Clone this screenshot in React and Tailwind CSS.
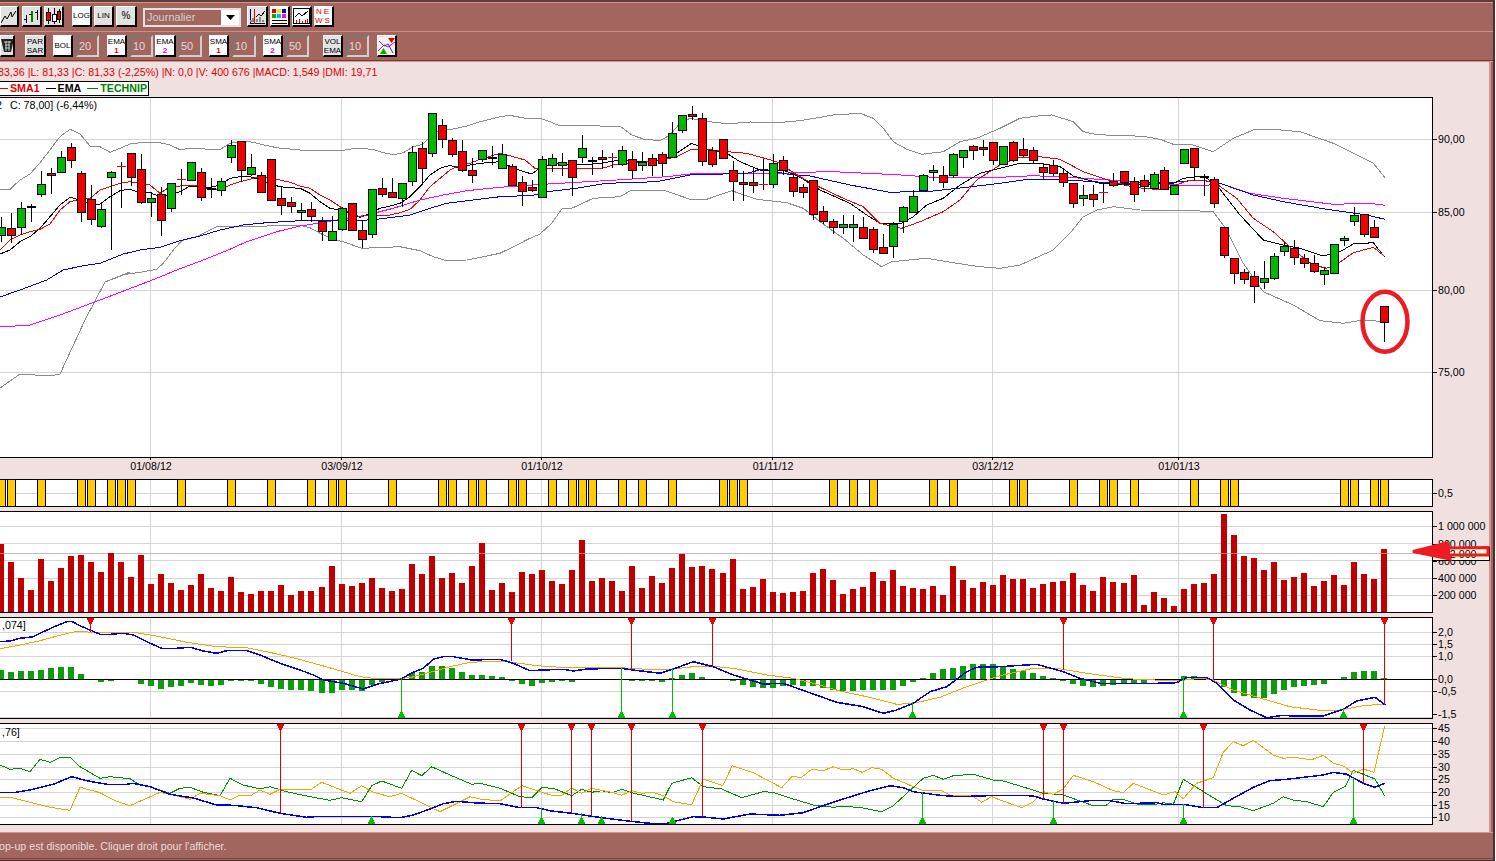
import React from "react";

// all chart data was read from the 3x crops: x = (offset + X) / 3, y = page origin + Y / 3
const candlesA = [
  ["g",380,405,350,425],["r",385,405,340,430],["g",325,382,305,405],["k",318,323,312,365],["g",253,283,213,290],["r",218,224,205,282],["g",170,215,152,218],["r",142,181,130,203],["r",220,335,213,365],["r",298,358,255,375],
  ["g",328,377,310,385],["g",217,230,212,450],["d",197,197,185,323],["r",160,232,160,258],["r",208,307,163,312],["g",295,307,275,350],["r",283,361,262,408],["g",250,325,250,335],["d",238,238,208,285],["g",187,241,187,241],
  ["r",217,292,205,303],["k",265,271,235,293],["g",244,271,235,288],["g",136,172,120,190],["r",124,211,124,245],["g",202,223,163,228],["r",226,275,215,275],["r",178,301,178,301],["r",295,316,260,345],["r",307,319,292,338],
  ["g",331,337,310,362],["r",328,349,305,365],["r",364,394,352,423],["g",394,421,348,421],["g",325,388,322,392],["r",310,391,310,391],["r",391,418,362,445],["g",268,403,268,415],["r",265,281,235,290],["r",277,292,235,293],
  ["g",250,295,248,320],["g",157,244,138,258],["r",145,205,125,252],["g",40,160,40,170],["r",76,118,57,143],["r",121,163,115,172],["r",154,211,120,215],["r",211,226,175,248],["g",151,178,151,187],["k",172,175,138,195],
  ["g",163,205,132,208],["r",199,256,193,258],["r",247,274,228,318],["r",262,271,240,275],["g",176,292,168,292],["g",175,196,162,215],["g",187,196,160,228],["r",181,232,181,288],["g",145,172,105,188],["k",181,185,170,225],
  ["r",172,178,150,208],["d",172,172,160,205],["g",151,193,138,197],["r",178,211,153,237],["g",187,196,157,212],["r",175,196,163,228],["r",163,190,155,228],["g",100,172,66,175],["g",46,91,46,98],["r",43,49,18,60],
  ["r",55,184,40,197],["r",151,193,140,200],["r",118,175,118,178],["r",211,244,183,302],["r",247,253,212,302],["r",247,256,205,280],["d",253,253,178,270],["g",190,253,162,263],["r",181,211,168,225],["r",232,274,218,290],
  ["r",262,277,252,293],["r",241,343,241,360],["r",334,364,318,373],["r",364,382,358,402],["g",373,382,345,402],["g",373,382,345,425],["r",382,415,352,415],["r",388,448,382,458],["r",442,460,402,460],["g",373,439,365,473],
  ["g",322,364,318,398],["g",289,337,270,337],["g",226,271,222,271],["g",211,217,195,243],["r",226,247,198,263],["g",163,226,160,233],["g",151,172,151,205],["r",139,151,135,180],["r",142,148,120,168],["r",127,181,127,195],
  ["g",139,193,139,193],["r",127,181,124,187],["r",148,166,115,170],["r",151,181,142,193],["r",202,217,193,238],["r",196,220,180,228],["r",220,247,205,260],["r",250,310,250,323],["g",286,295,255,317],["r",283,298,255,320],
  ["d",277,277,250,308],["r",244,256,220,262],["r",214,247,214,258],["r",244,283,232,305],["r",241,259,225,277],["g",223,265,217,265],["r",211,268,202,270],["g",256,283,256,283],["g",148,190,148,190],["r",145,202,145,243],
  ["k",227,231,222,287],["r",238,310,232,323],["r",382,466,382,475],["r",475,520,475,551],["r",517,538,508,551],["r",529,559,514,608],["g",535,547,483,568],["g",469,535,460,540],["g",439,454,425,467],["r",445,472,421,494],
  ["r",475,490,463,505],["r",490,514,465,518],["g",511,523,500,554],["g",433,520,433,520],["g",415,421,409,439],["g",346,364,321,378],["r",343,403,343,410],["r",382,412,360,412],["r",619,667,619,727],
];

const bollUp = [
  [0,[0,270,30,268,60,240,90,222,120,188,150,150,180,110,210,88,240,102,270,138,300,140,330,157,360,145,390,132,420,128,450,126,480,128,510,135,540,149,570,145,600,145,630,149,660,149,690,130,720,125,750,125,780,132,810,139,840,145,870,147,900,150,930,151,960,152,1000,152,1030,151,1060,146,1090,146,1120,148,1150,158,1180,164,1210,158,1240,140,1270,132,1300,100,1330,90,1360,87,1400,78,1440,65,1500,50]],
  [1500,[30,46,60,52,90,57,120,55,150,65,180,78,230,76,300,78,360,78,395,105,430,117,480,122,510,105,540,70,570,55,600,60,650,68,690,71,750,66,830,68,900,62,1000,45,1080,40,1120,55,1150,85,1180,125,1220,148,1265,163,1330,155,1380,125,1430,115,1500,85]],
  [3000,[60,55,120,47,155,45,220,65,250,95,290,104,430,109,480,118,520,133,580,135,640,155,700,115,760,90,820,88,900,95,1000,130,1060,160,1120,190,1155,233]],
];
const bollLow = [
  [0,[0,864,60,822,150,828,180,822,255,660,315,546,390,516,340,537,370,524,420,517,470,508,490,490,520,450,545,422,590,410,620,395,650,380,700,378,800,378,900,376,930,383,960,400,1000,418,1030,425,1085,445,1200,440,1260,452,1300,470,1340,482,1400,480,1500,460]],
  [1500,[50,435,90,415,120,402,155,370,185,327,215,325,280,295,360,290,390,273,490,270,570,298,620,298,695,272,770,298,860,308,910,325,960,365,1030,415,1090,465,1145,500,1175,485,1280,475,1370,490,1440,500,1500,505]],
  [3000,[60,495,160,450,210,400,250,350,290,330,340,320,420,330,600,333,640,335,680,390,730,490,790,575,880,615,960,662,1030,670,1090,660,1153,665]],
];
const emaBlack = [
  [0,[0,462,30,450,60,425,90,410,120,385,150,350,180,315,210,292,240,300,270,312,300,312,330,290,360,272,390,267,420,280,450,278,480,290,510,285,540,275,570,258,600,262,630,262,660,255,690,235,720,230,750,230,780,240,810,252,840,260,870,263,900,265,930,280,960,305,990,325,1020,330,1050,338,1080,352,1110,340,1140,325,1170,318,1200,310,1230,290,1260,260,1290,225,1320,205,1350,196,1380,205,1410,195,1440,190,1500,185]],
  [1500,[50,208,95,222,125,200,170,190,240,195,300,190,360,180,420,185,490,180,530,160,575,130,610,145,680,160,720,185,780,210,850,210,900,232,960,270,1050,310,1100,345,1140,370,1200,372,1240,350,1280,315,1330,295,1380,255,1440,220,1500,205]],
  [3000,[60,190,120,190,180,200,220,228,300,250,400,255,520,250,550,235,610,228,650,255,720,345,790,420,850,435,900,445,970,468,1020,455,1060,432,1120,428,1153,470]],
];
const smaRed = [
  [0,[0,450,30,420,60,405,90,395,120,388,150,372,180,330,210,305,240,298,270,295,300,270,330,260,360,250,390,245,420,250,450,255,480,280,510,260,540,258,570,255,600,258,630,268,660,268,690,255,720,245,750,238,780,228,810,235,840,240,870,247,900,258,930,265,960,285,990,300,1020,320,1050,338,1080,350,1110,345,1170,345,1200,338,1230,328,1260,300,1290,260,1320,235,1350,210,1380,195,1410,190,1440,178,1500,160]],
  [1500,[40,170,75,180,105,205,210,205,300,207,340,195,420,188,490,180,530,170,570,150,620,148,680,155,740,160,830,185,900,230,960,262,1030,295,1090,320,1140,370,1205,385,1260,365,1330,335,1380,300,1430,240,1500,195]],
  [3000,[60,172,120,170,180,178,250,215,330,242,400,262,490,270,560,243,610,240,650,252,710,295,760,355,820,395,880,450,940,495,980,505,1015,490,1060,458,1120,442,1153,468]],
];
const blueLong = [
  [0,[0,591,60,570,140,540,190,510,250,497,300,490,370,462,420,450,480,442,540,422,600,408,660,390,730,375,800,368,900,362,970,360,1100,360,1130,358,1180,352,1230,345,1290,325,1340,310,1420,300,1500,290]],
  [1500,[100,286,140,275,230,265,320,250,470,245,570,225,740,220,790,207,860,222,930,228,1050,255,1170,277,1300,273,1400,262,1500,250]],
  [3000,[70,240,170,238,250,243,350,250,520,247,600,240,660,250,760,285,850,305,980,328,1100,345,1155,358]],
];
const magentaLong = [
  [0,[0,681,90,675,180,645,300,600,465,537,530,510,610,480,680,452,740,425,830,395,900,378,940,372,1000,362,1100,345,1180,325,1260,300,1330,285,1400,272,1500,262]],
  [1500,[130,253,350,240,500,230,570,222,700,220,820,222,900,217,1000,215,1190,224,1300,232,1500,232]],
  [3000,[100,227,200,232,330,240,450,250,560,257,610,258,660,250,750,280,850,295,1000,313,1110,310,1155,316]],
];

const macdBlue = [
  [0,[0,80,30,78,60,70,100,65,130,50,170,32,200,20,215,19,240,32,270,45,300,58,330,58,370,55,400,60,440,80,485,100,530,100,570,97,610,108,650,115,680,107,740,107,780,120,840,145,900,165,940,180,970,195,1030,205,1090,222,1130,208,1200,193,1240,172,1270,160,1300,133,1330,125,1360,125,1415,135,1500,133]],
  [1500,[40,145,90,167,130,165,190,163,220,168,260,162,360,160,400,165,480,175,520,162,580,140,640,155,700,180,790,207,850,205,920,230,1010,262,1090,275,1150,295,1190,285,1240,265,1290,230,1340,215,1400,170,1430,157,1500,155]],
  [3000,[110,148,190,170,240,190,300,205,390,205,470,205,530,203,560,187,620,187,650,205,700,255,750,285,800,308,840,302,970,303,1030,283,1070,258,1125,247,1156,270]],
];
const macdOrange = [
  [0,[0,101,60,90,120,77,190,58,225,50,300,52,400,52,480,65,560,82,650,95,740,98,800,110,880,128,960,150,1030,170,1080,185,1130,191,1200,190,1230,188,1290,172,1350,155,1410,142,1500,138]],
  [1500,[60,145,110,152,200,158,360,158,440,163,510,163,580,155,640,154,700,160,800,180,880,190,950,208,1020,228,1100,245,1190,268,1240,265,1320,247,1400,215,1500,182]],
  [3000,[90,162,170,160,260,175,380,191,530,198,600,190,640,195,700,225,800,255,870,275,950,285,1020,285,1090,272,1156,267]],
];
const dmiGreen = [
  [0,[0,450,30,463,60,460,90,470,120,433,150,442,180,428,210,427,240,455,300,490,330,485,390,491,420,510,450,516,510,535,540,520,570,517,610,532,660,542,690,490,730,510,780,522,810,515,860,530,930,545,990,556,1025,548,1085,560,1115,512,1145,498,1205,520,1235,466,1265,482,1295,455,1350,480,1415,508,1440,505,1500,520]],
  [1500,[60,545,95,548,125,518,160,520,215,542,245,523,275,532,305,527,335,533,365,523,395,533,490,555,515,505,575,488,610,515,665,522,725,548,790,530,820,532,880,552,940,570,1000,577,1030,574,1085,578,1145,590,1180,572,1240,517,1270,490,1300,481,1330,493,1360,482,1420,478,1480,495,1500,495]],
  [3000,[70,516,130,535,190,540,280,572,320,570,340,553,370,553,410,567,470,567,490,563,520,568,550,493,640,548,680,572,720,575,760,587,820,565,850,545,880,555,920,560,970,575,1000,532,1035,515,1060,466,1125,492,1154,543]],
];
const dmiOrange = [
  [0,[0,547,30,547,90,562,150,577,210,586,240,517,300,533,345,557,390,572,440,550,480,532,520,540,570,553,600,535,660,542,690,555,720,540,750,543,780,525,810,538,840,523,900,524,935,522,965,502,1050,535,1085,512,1120,532,1170,545,1205,535,1320,590,1410,545,1440,552,1500,558]],
  [1500,[65,512,120,530,155,541,185,541,215,519,245,535,275,520,335,532,365,541,395,527,425,535,460,532,490,542,520,560,575,569,610,492,668,512,697,452,760,473,845,518,875,485,905,487,935,463,970,467,1000,455,1030,465,1060,461,1087,472,1115,458,1145,463,1180,490,1270,527,1325,527,1355,542,1415,542,1445,562,1475,545,1500,555]],
  [3000,[65,578,100,560,130,530,160,538,190,522,220,481,280,500,340,527,370,533,400,505,490,540,525,530,550,551,590,505,640,488,670,412,700,380,730,392,760,376,820,420,850,430,880,427,935,434,970,421,1000,445,1030,453,1060,475,1090,462,1122,472,1154,333]],
];
const dmiBlue = [
  [0,[0,533,40,533,90,525,160,508,215,485,260,497,320,508,380,508,400,505,450,515,510,538,580,549,650,570,700,571,770,578,840,595,920,607,960,604,1115,604,1200,608,1240,600,1290,582,1330,566,1370,559,1430,564,1500,566]],
  [1500,[60,578,110,578,155,588,215,595,275,604,335,612,390,619,450,625,500,625,580,605,620,607,670,612,750,597,840,601,910,593,960,575,1030,552,1100,530,1170,512,1210,518,1240,530,1320,541,1375,545,1500,541]],
  [3000,[60,541,100,543,130,552,190,565,280,556,330,557,380,566,470,563,490,568,550,568,610,578,650,578,700,550,760,517,810,497,860,493,970,480,1000,472,1040,478,1090,505,1125,517,1155,505]],
];

const volumeTops = [
  282,336,384,420,327,393,354,318,315,336,366,310,336,381,315,402,372,399,420,405,372,414,423,381,426,432,423,423,405,435,423,423,411,348,402,408,399,384,414,423,417,342,372,318,384,369,399,348,279,420,
  399,426,366,372,360,393,402,360,270,393,384,393,423,348,414,378,399,354,312,351,348,357,369,327,417,411,387,426,429,426,423,369,357,390,432,417,411,366,393,360,408,414,417,408,435,348,390,414,396,405,
  375,387,387,414,402,396,393,369,405,423,381,396,399,375,465,426,444,468,417,402,399,372,192,255,318,324,360,336,390,381,369,408,393,375,405,336,372,387,297,
];
const yellowIdx = [0,1,4,8,9,11,12,13,18,23,27,31,33,34,39,44,45,47,48,51,52,55,57,58,59,62,64,67,72,73,74,83,85,87,93,95,101,102,107,110,111,113,119,122,123,134,135,137,138];

// histogram end per candle, 192 is the zero line, null where nothing shows
const macdHist = [
  166,171,168,168,165,159,156,156,177,null,200,197,null,null,207,213,221,216,213,204,210,213,210,197,197,197,207,216,222,225,225,228,234,234,225,225,228,210,201,null,190,174,171,153,153,159,171,180,180,183,
  186,197,207,213,204,201,197,201,null,null,null,null,null,197,197,197,201,189,180,174,186,null,null,197,210,216,219,219,213,210,213,213,219,225,228,228,225,225,225,225,213,201,189,174,162,159,153,147,147,147,
  156,162,168,174,183,189,197,207,213,216,213,210,204,208,204,null,null,197,183,183,186,null,216,234,243,249,249,237,225,216,213,210,207,null,186,171,168,168,190,
];

const gridX = [150, 341, 541, 772, 992, 1178];
const cx = (i) => Math.round(0.7 + 10.025 * i);
const pts = (segments, y0) =>
  segments
    .flatMap(([off, flat]) => {
      const out = [];
      for (let i = 0; i < flat.length; i += 2) out.push(`${((off + flat[i]) / 3).toFixed(1)},${(y0 + flat[i + 1] / 3).toFixed(1)}`);
      return out;
    })
    .join(" ");

function Line({ data, y0, color, w = 1 }) {
  return <polyline points={pts(data, y0)} fill="none" stroke={color} strokeWidth={w} />;
}

// plot box with black frame, inner svg is addressed in page coordinates
function Plot({ top, bottom, grid = [], zero, children }) {
  const h = bottom - top - 1;
  return (
    <div className="w-[1433px] bg-white border-y border-r border-black shrink-0">
      <svg width="1432" height={h} viewBox={`0 ${top + 1} 1432 ${h}`} shapeRendering="crispEdges" className="block">
        {gridX.map((x) => (
          <line key={x} x1={x + 0.5} x2={x + 0.5} y1={top} y2={bottom} stroke="#d4d4d4" />
        ))}
        {grid.map((y) => (
          <line key={y} x1="0" x2="1432" y1={y + 0.5} y2={y + 0.5} stroke="#d4d4d4" />
        ))}
        {zero && <line x1="0" x2="1432" y1={zero + 0.5} y2={zero + 0.5} stroke="#000" />}
        {children}
      </svg>
    </div>
  );
}

function Axis({ top, bottom, labels }) {
  const h = bottom - top + 1;
  return (
    <svg width="57" height={h} viewBox={`0 ${top} 57 ${h}`} className="block shrink-0">
      {labels.map(([y, t]) => (
        <g key={t}>
          <line x1="0" x2="4" y1={y + 0.5} y2={y + 0.5} stroke="#000" shapeRendering="crispEdges" />
          <text x="5" y={y + 4} fontSize="10.67" fill="#000">{t}</text>
        </g>
      ))}
    </svg>
  );
}

function Candle({ c, i }) {
  const [kind, top, bot, wt, wb] = c;
  const x = cx(i);
  const y1 = Math.round(top / 3) + 100;
  const y2 = Math.round(bot / 3) + 100;
  const wy1 = Math.round(wt / 3) + 100;
  const wy2 = Math.round(wb / 3) + 100;
  return (
    <g>
      <line x1={x + 0.5} x2={x + 0.5} y1={wy1} y2={wy2} stroke="#000" />
      {kind === "d" ? (
        <line x1={x - 4} x2={x + 5} y1={y1 + 0.5} y2={y1 + 0.5} stroke="#f00000" />
      ) : kind === "k" ? (
        <rect x={x - 4} y={y1} width="9" height="2" fill="#000" />
      ) : (
        <rect x={x - 3.5} y={y1 + 0.5} width="8" height={y2 - y1} fill={kind === "g" ? "#00b800" : "#f00000"} stroke="#000" />
      )}
    </g>
  );
}

function SellMark({ x, top, end }) {
  return (
    <g>
      <line x1={x + 0.5} x2={x + 0.5} y1={top} y2={end} stroke="#dd0000" />
      <polygon points={`${x - 3},${top - 1} ${x + 4},${top - 1} ${x + 4},${top + 1} ${x + 1},${top + 7} ${x},${top + 7} ${x - 3},${top + 1}`} fill="#f00000" />
    </g>
  );
}

function BuyMark({ x, bottom, start }) {
  return (
    <g>
      <line x1={x + 0.5} x2={x + 0.5} y1={start} y2={bottom} stroke="#00c000" />
      <polygon points={`${x - 3},${bottom} ${x + 4},${bottom} ${x + 4},${bottom - 1} ${x + 1},${bottom - 7} ${x},${bottom - 7} ${x - 3},${bottom - 1}`} fill="#00c000" />
    </g>
  );
}

const btnBase = "flex flex-col items-center justify-center shrink-0 overflow-hidden border-t border-l border-r-2 border-b-2 border-t-white border-l-white border-r-black border-b-black text-black leading-[10px]";

function Btn({ className, on, children }) {
  return <div className={`${btnBase} ${on ? "bg-white" : "bg-[#e2e2e2]"} ${className}`}>{children}</div>;
}

function NumBox({ className, children }) {
  return (
    <div className={`shrink-0 h-[22px] flex items-center pl-[1px] bg-[#a2665f] border-2 border-t-[#777777] border-l-[#777777] border-r-[#cfcfcf] border-b-[#cfcfcf] text-[#dcdcdc] text-[11px] ${className}`}>
      {children}
    </div>
  );
}

function TwoLine({ a, b, color }) {
  return (
    <>
      <span className="text-[8px] leading-[9px]">{a}</span>
      <span className={`text-[8px] leading-[9px] ${color}`}>{b}</span>
    </>
  );
}

function Toolbar() {
  return (
    <div className="shrink-0">
      <div className="h-[2px] bg-[#5e3d39]" />
      <div className="h-px bg-[#d9938a]" />
      <div className="h-[28px] pt-[3px] flex items-start">
        <Btn className="w-[19px] h-[21px]">
          <svg width="16" height="15" viewBox="0 0 16 15" fill="none" stroke="#000"><path d="M0 14 L4 7 L6 10 L10 3 L11 8 L15 2" /></svg>
        </Btn>
        <Btn className="w-[20px] h-[21px] ml-[3px]">
          <svg width="16" height="15" viewBox="0 0 16 15" fill="none" stroke="#000" shapeRendering="crispEdges">
            <path d="M2.5 6V14M0 10H3M13.5 1V11M11 3H14" /><path d="M7.5 2V13" stroke="#008000" strokeWidth="2" /><path d="M5 5H8" />
          </svg>
        </Btn>
        <Btn className="w-[20px] h-[21px] ml-[2px]">
          <svg width="16" height="17" viewBox="0 0 16 17" stroke="#000" shapeRendering="crispEdges">
            <path d="M2.5 0V16M8.5 0V16M13.5 1V15" /><rect x="0.5" y="4.5" width="4" height="8" fill="#f00000" /><rect x="6.5" y="6.5" width="4" height="7" fill="#fff" /><rect x="11.5" y="3.5" width="3" height="8" fill="#f00000" />
          </svg>
        </Btn>
        <Btn on className="w-[20px] h-[21px] ml-[8px] text-[8px]">LOG</Btn>
        <Btn className="w-[20px] h-[21px] ml-[2px] text-[8px]">LIN</Btn>
        <Btn className="w-[21px] h-[21px] ml-[2px] text-[10px]">%</Btn>
        <div className="w-[98px] h-[19px] mt-[2px] ml-[6px] shrink-0 flex border-2 border-[#e8e0e0] bg-[#a2665f]">
          <span className="flex-1 pl-[2px] text-[11px] leading-[15px] text-[#d0d0d0]">Journalier</span>
          <span className="w-[18px] bg-white flex items-center justify-center">
            <svg width="9" height="5" viewBox="0 0 9 5"><polygon points="0,0 9,0 4.5,5" fill="#000" /></svg>
          </span>
        </div>
        <Btn className="w-[21px] h-[21px] ml-[6px]">
          <svg width="17" height="17" viewBox="0 0 17 17" fill="none" shapeRendering="crispEdges">
            <path d="M1 15H16M1 1V15" stroke="#000" /><path d="M5.5 1V16" stroke="#e00000" /><path d="M2 14V12M4 14V10M8 14V11M11 14V9M14 14V12" stroke="#888888" strokeWidth="2" /><path d="M7 9L10 6L12 8L16 3" stroke="#000" />
          </svg>
        </Btn>
        <Btn on className="w-[20px] h-[21px] ml-[2px]">
          <svg width="17" height="17" viewBox="0 0 17 17" shapeRendering="crispEdges">
            <rect x="1" y="1" width="4" height="4" fill="#e00000" /><rect x="6" y="1" width="4" height="4" fill="#ffe000" /><rect x="11" y="1" width="4" height="4" fill="#0000e0" />
            <rect x="1" y="6" width="4" height="4" fill="#00b000" /><rect x="6" y="6" width="4" height="4" fill="#00c0e0" /><rect x="11" y="6" width="4" height="4" fill="#ff00ff" />
            <rect x="1" y="12" width="15" height="1" fill="#000" /><rect x="1" y="15" width="15" height="1" fill="#000" />
          </svg>
        </Btn>
        <Btn on className="w-[20px] h-[21px] ml-[2px]">
          <svg width="17" height="17" viewBox="0 0 17 17" fill="none" shapeRendering="crispEdges">
            <rect x="0.5" y="0.5" width="16" height="15" stroke="#000" /><path d="M2 9L6 5L9 8L15 3" stroke="#000" /><path d="M3 15V12M6 15V11M9 15V13M12 15V12M14 15V11" stroke="#d00000" />
          </svg>
        </Btn>
        <Btn on className="w-[20px] h-[21px] ml-[2px]">
          <span className="text-[8px] leading-[9px] tracking-[2px] text-[#e00000]">NE</span>
          <span className="text-[8px] leading-[9px] tracking-[2px] text-[#e00000]">WS</span>
        </Btn>
      </div>
      <div className="h-px bg-[#c98f88]" />
      <div className="h-[28px] pt-[3px] flex items-start">
        <Btn className="w-[15px] h-[22px]">
          <svg width="13" height="15" viewBox="0 0 13 15"><polygon points="0,1 13,1 10,14 3,14" fill="#222222" /><path d="M3 4H10M4 7H9M4 10H9M5 3V13M8 3V13" stroke="#cccccc" /></svg>
        </Btn>
        <Btn className="w-[21px] h-[22px] ml-[10px]"><TwoLine a="PAR" b="SAR" color="text-black" /></Btn>
        <Btn on className="w-[20px] h-[22px] ml-[7px] text-[8px]">BOL</Btn>
        <NumBox className="w-[23px] ml-[3px]">20</NumBox>
        <Btn on className="w-[20px] h-[22px] ml-[8px]"><TwoLine a="EMA" b="1" color="text-[#e00000] font-bold" /></Btn>
        <NumBox className="w-[23px] ml-[3px]">10</NumBox>
        <Btn on className="w-[21px] h-[22px] ml-[2px]"><TwoLine a="EMA" b="2" color="text-[#d000d0] font-bold" /></Btn>
        <NumBox className="w-[24px] ml-[2px]">50</NumBox>
        <Btn on className="w-[20px] h-[22px] ml-[7px]"><TwoLine a="SMA" b="1" color="text-[#e00000] font-bold" /></Btn>
        <NumBox className="w-[24px] ml-[3px]">10</NumBox>
        <Btn on className="w-[20px] h-[22px] ml-[7px]"><TwoLine a="SMA" b="2" color="text-[#d000d0] font-bold" /></Btn>
        <NumBox className="w-[23px] ml-[3px]">50</NumBox>
        <Btn className="w-[20px] h-[22px] ml-[14px]"><TwoLine a="VOL" b="EMA" color="text-black" /></Btn>
        <NumBox className="w-[23px] ml-[3px]">10</NumBox>
        <Btn className="w-[20px] h-[22px] ml-[8px]">
          <svg width="18" height="18" viewBox="0 0 18 18" fill="none">
            <rect width="18" height="18" fill="#f4f0e8" />
            <path d="M0 14L6 8L10 10L17 5" stroke="#d000d0" /><path d="M1 4L6 9L10 7L15 16" stroke="#2040e0" />
            <polygon points="10,1 17,1 13.5,6" fill="#e00000" /><polygon points="2,17 9,17 5.5,11" fill="#00b000" />
          </svg>
        </Btn>
      </div>
      <div className="h-[1px] bg-[#6e3f3a]" />
      <div className="h-[1px] bg-[#d9938a]" />
    </div>
  );
}

function MainChart() {
  return (
    <div className="flex">
      <Plot top={97} bottom={457} grid={[139, 212, 290, 372]}>
        <text x="-4" y="109" fontSize="10.67" fill="#000">2</text>
        <text x="10" y="109" fontSize="10.67" fill="#000">C: 78,00] (-6,44%)</text>
        <polyline points={pts(bollUp, 100)} fill="none" stroke="#8c8c8c" />
        <polyline points={pts(bollLow, 100)} fill="none" stroke="#8c8c8c" />
        <Line data={magentaLong} y0={100} color="#ff00ff" />
        <Line data={blueLong} y0={100} color="#0000ee" />
        <Line data={emaBlack} y0={100} color="#000" />
        <Line data={smaRed} y0={100} color="#f00000" />
        {candlesA.map((c, i) => (
          <Candle key={i} c={c} i={i} />
        ))}
        <ellipse cx="1385" cy="321.7" rx="22.5" ry="30" fill="none" stroke="#ed1c24" strokeWidth="4.5" shapeRendering="auto" />
      </Plot>
      <Axis top={97} bottom={457} labels={[[139, "90,00"], [212, "85,00"], [290, "80,00"], [372, "75,00"]]} />
    </div>
  );
}

function DateRow() {
  const dates = [[150, "01/08/12"], [341, "03/09/12"], [541, "01/10/12"], [772, "01/11/12"], [992, "03/12/12"], [1178, "01/01/13"]];
  return (
    <svg width="1433" height="21" viewBox="0 458 1433 21" className="block">
      {dates.map(([x, t]) => (
        <g key={t}>
          <line x1={x + 0.5} x2={x + 0.5} y1="458" y2="460" stroke="#000" shapeRendering="crispEdges" />
          <text x={x + 1} y="470" fontSize="10.67" textAnchor="middle" fill="#000">{t}</text>
        </g>
      ))}
    </svg>
  );
}

function SignalPanel() {
  return (
    <div className="flex">
      <Plot top={479} bottom={506} grid={[493]}>
        {yellowIdx.map((i) => (
          <rect key={i} x={cx(i) - 3.5} y="479.5" width="8" height="27" fill="#ffcc00" stroke="#000" />
        ))}
      </Plot>
      <Axis top={479} bottom={506} labels={[[493, "0,5"]]} />
    </div>
  );
}

function VolumePanel() {
  return (
    <div className="flex relative mt-[4px]">
      <Plot top={511} bottom={612} grid={[526, 543, 560, 578, 595]}>
        <line x1="0" x2="1432" y1="553.5" y2="553.5" stroke="#bdbdbd" />
        {volumeTops.map((t, i) => {
          const y = 450 + Math.round(t / 3);
          return (
            <g key={i}>
              <rect x={cx(i) - 3} y={y} width="6" height={612 - y} fill="#c00000" />
              {y < 553 && <rect x={cx(i) - 3} y="553" width="6" height="1" fill="#f06060" />}
            </g>
          );
        })}
      </Plot>
      <Axis top={511} bottom={612} labels={[[526, "1 000 000"], [544, "800 000"], [561, "600 000"], [578, "400 000"], [595, "200 000"]]} />
      {/* price tooltip, with the red arrow someone drew over it */}
      <div className="absolute left-[1432px] top-[36px] w-[58px] h-[14px] bg-[#fff8d8] border border-black text-[10.67px] leading-[12px] pl-[5px]">602 000</div>
      <svg width="84" height="24" viewBox="1409 539 84 24" className="absolute left-[1409px] top-[28px]" shapeRendering="auto">
        <path d="M1488 547.5 L1449 548 L1447 543 L1413 551.5 L1450 559 L1449 555 L1488 555 Z" fill="none" stroke="#ed1c24" strokeWidth="3" />
        <polygon points="1447,543 1412,551.5 1447,559 1450,555 1450,548" fill="#ed1c24" />
      </svg>
    </div>
  );
}

function MacdPanel() {
  const sells = [[90, 632], [511, 661], [631, 670], [712, 667], [1063, 670], [1213, 680], [1384, 705]];
  const buys = [[401, 678], [621, 668], [672, 668], [912, 702], [1183, 678], [1343, 708]];
  return (
    <div className="flex mt-[4px]">
      <Plot top={617} bottom={718} grid={[632, 644, 656, 691, 717]}>
        <text x="2" y="629" fontSize="10.67" fill="#000">,074]</text>
        {macdHist.map((v, i) => {
          if (v == null) return null;
          const y = 615 + Math.round(v / 3);
          return <rect key={i} x={cx(i) - 3} y={Math.min(y, 679)} width="6" height={Math.abs(y - 679)} fill="#0a9e0a" />;
        })}
        <line x1="0" x2="1432" y1="679.5" y2="679.5" stroke="#000" />
        <Line data={macdOrange} y0={615} color="#f0a800" />
        <Line data={macdBlue} y0={615} color="#0000e0" w={1.5} />
        {sells.map(([x, end]) => <SellMark key={x} x={x} top={618} end={end} />)}
        {buys.map(([x, start]) => <BuyMark key={x} x={x} bottom={718} start={start} />)}
      </Plot>
      <Axis top={617} bottom={718} labels={[[632, "2,0"], [644, "1,5"], [656, "1,0"], [679, "0,0"], [691, "-0,5"], [714, "-1,5"]]} />
    </div>
  );
}

function DmiPanel() {
  const sells = [[280, 813], [521, 808], [571, 813], [591, 816], [631, 821], [702, 817], [1043, 799], [1063, 803], [1203, 808], [1363, 783]];
  const buys = [[371, 816], [541, 808], [581, 813], [601, 816], [672, 817], [922, 792], [1053, 800], [1183, 804], [1353, 778]];
  return (
    <div className="flex mt-[4px]">
      <Plot top={723} bottom={824} grid={[728, 741, 754, 767, 779, 792, 805, 817]}>
        <text x="2" y="736" fontSize="10.67" fill="#000">,76]</text>
        <Line data={dmiGreen} y0={615} color="#008f00" />
        <Line data={dmiOrange} y0={615} color="#f0a800" />
        <Line data={dmiBlue} y0={615} color="#0000e0" w={1.5} />
        {sells.map(([x, end]) => <SellMark key={x} x={x} top={724} end={end} />)}
        {buys.map(([x, start]) => <BuyMark key={x} x={x} bottom={824} start={start} />)}
      </Plot>
      <Axis top={723} bottom={824} labels={[[728, "45"], [741, "40"], [754, "35"], [767, "30"], [779, "25"], [792, "20"], [805, "15"], [817, "10"]]} />
    </div>
  );
}

export default function App() {
  return (
    <div className="w-[1496px] h-[861px] bg-white overflow-hidden font-['Liberation_Sans',Arial,sans-serif]">
      <div className="w-[1495px] h-[861px] border-r-2 border-b border-[#4a2f2c] bg-[#a2665f] flex flex-col overflow-hidden">
        <Toolbar />
        <div className="flex-1 min-h-0 mr-[2px] bg-[#f0e0e0] border-r-2 border-[#d9938a]">
          <div className="h-[19px] flex items-end pb-[2px] text-[10.67px] leading-[13px] text-[#e00000] -ml-[2px] whitespace-nowrap">
            83,36 |L: 81,33 |C: 81,33 (-2,25%) |N: 0,0 |V: 400 676 |MACD: 1,549 |DMI: 19,71
          </div>
          <div className="w-[149px] h-[15px] bg-white border-y border-r border-black flex items-center text-[10.67px] leading-[13px] font-bold">
            <span className="w-[8px] h-px bg-[#e00000]" />
            <span className="ml-[2px] text-[#e00000]">SMA1</span>
            <span className="w-[10px] h-px bg-black ml-[6px]" />
            <span className="ml-[2px] text-black">EMA</span>
            <span className="w-[11px] h-px bg-[#008000] ml-[6px]" />
            <span className="ml-[2px] text-[#008000]">TECHNIP</span>
          </div>
          <div className="h-px" />
          <MainChart />
          <DateRow />
          <SignalPanel />
          <VolumePanel />
          <MacdPanel />
          <DmiPanel />
        </div>
        <div className="h-[1px] bg-[#d9938a] shrink-0" />
        <div className="h-[25px] shrink-0 flex items-center text-[10.67px] text-[#e6dcdc] -ml-[1px] whitespace-nowrap">
          op-up est disponible. Cliquer droit pour l'afficher.
        </div>
        <div className="h-px bg-[#6e4742] shrink-0" />
        <div className="h-px bg-[#a2665f] shrink-0" />
      </div>
    </div>
  );
}
